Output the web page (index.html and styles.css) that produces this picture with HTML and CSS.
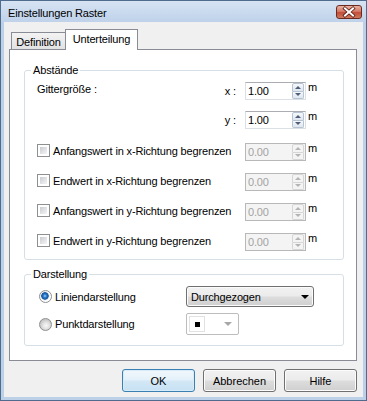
FILE: index.html
```html
<!DOCTYPE html>
<html>
  <head>
    <meta http-equiv="Content-Type" content="text/html;charset=UTF-8">
    <title>Einstellungen Raster</title>
    <link rel="stylesheet" href="styles.css">
  </head>
  <body>
    <div class="window">
      <div class="titlebar">
        <span class="title">Einstellungen Raster</span>
        <span class="close">
          <svg width="26" height="14" viewBox="0 0 26 14">
            <path d="M9 3.5 L17 10.5 M17 3.5 L9 10.5" stroke="#5a1a10" stroke-width="3.6" stroke-linecap="square"/>
            <path d="M9 3.5 L17 10.5 M17 3.5 L9 10.5" stroke="#fff" stroke-width="2" stroke-linecap="square"/>
          </svg>
        </span>
      </div>
      <div class="client">
        <div class="tabs">
          <div class="tab">Definition</div>
          <div class="tab active">Unterteilung</div>
        </div>
        <div class="panel">
          <fieldset class="group group-spacing">
            <legend>Abstände</legend>
            <div class="row row-x">
              <span class="lead"><span class="size-label">Gittergröße :</span></span>
              <span class="axis">x :</span>
              <div class="spin">
                <span class="spin-value">1.00</span>
                <span class="spin-buttons"><i class="up"></i><i class="down"></i></span>
              </div>
              <span class="unit">m</span>
            </div>
            <div class="row row-y">
              <span class="lead"></span>
              <span class="axis">y :</span>
              <div class="spin">
                <span class="spin-value">1.00</span>
                <span class="spin-buttons"><i class="up"></i><i class="down"></i></span>
              </div>
              <span class="unit">m</span>
            </div>
            <div class="row row-limit first">
              <label class="lead check-label"><span class="check"></span>Anfangswert in x-Richtung begrenzen</label>
              <div class="spin disabled">
                <span class="spin-value">0.00</span>
                <span class="spin-buttons"><i class="up"></i><i class="down"></i></span>
              </div>
              <span class="unit">m</span>
            </div>
            <div class="row row-limit">
              <label class="lead check-label"><span class="check"></span>Endwert in x-Richtung begrenzen</label>
              <div class="spin disabled">
                <span class="spin-value">0.00</span>
                <span class="spin-buttons"><i class="up"></i><i class="down"></i></span>
              </div>
              <span class="unit">m</span>
            </div>
            <div class="row row-limit">
              <label class="lead check-label"><span class="check"></span>Anfangswert in y-Richtung begrenzen</label>
              <div class="spin disabled">
                <span class="spin-value">0.00</span>
                <span class="spin-buttons"><i class="up"></i><i class="down"></i></span>
              </div>
              <span class="unit">m</span>
            </div>
            <div class="row row-limit">
              <label class="lead check-label"><span class="check"></span>Endwert in y-Richtung begrenzen</label>
              <div class="spin disabled">
                <span class="spin-value">0.00</span>
                <span class="spin-buttons"><i class="up"></i><i class="down"></i></span>
              </div>
              <span class="unit">m</span>
            </div>
          </fieldset>
          <fieldset class="group group-display">
            <legend>Darstellung</legend>
            <div class="mode-row first">
              <label class="mode-label"><span class="radio checked"></span>Liniendarstellung</label>
              <div class="combo">
                <span class="combo-text">Durchgezogen</span>
                <span class="combo-arrow"></span>
              </div>
            </div>
            <div class="mode-row second">
              <label class="mode-label"><span class="radio"></span>Punktdarstellung</label>
              <div class="combo combo-small">
                <span class="swatch"><span class="dot"></span></span>
                <span class="combo-arrow"></span>
              </div>
            </div>
          </fieldset>
        </div>
        <div class="buttons">
          <button class="btn default">OK</button>
          <button class="btn">Abbrechen</button>
          <button class="btn">Hilfe</button>
        </div>
      </div>
    </div>
  </body>
</html>
```

FILE: styles.css
```css
body {
  margin: 0;
  font-family: "Liberation Sans", Arial, sans-serif;
  font-size: 11px;
  letter-spacing: -0.15px;
  color: #000;
}
.window {
  width: 367px;
  height: 401px;
  box-sizing: border-box;
  border: 1px solid #4f6b8e;
  background: #bcd0e8;
  padding: 0 3px 3px;
  display: flex;
  flex-direction: column;
}
.titlebar {
  height: 21px;
  margin: 0 -3px;
  padding: 0 4px 0 7px;
  display: flex;
  align-items: flex-start;
  background: linear-gradient(#d6e3f3, #bfd2ea);
}
.title {
  margin-top: 5px;
  line-height: 14px;
  flex: 1;
}
.close {
  margin-top: 4px;
  width: 26px;
  height: 14px;
  box-sizing: border-box;
  border: 1px solid #6b2a1f;
  border-radius: 3px;
  background: linear-gradient(#eab2a4, #d47a68 45%, #c24d39 55%, #cf7a5e);
  display: flex;
  align-items: center;
  justify-content: center;
}
.close svg {
  display: block;
  margin: -1px;
}
.client {
  flex: 1;
  background: #f0f0f0;
  padding: 7px 6px 0 5px;
  display: flex;
  flex-direction: column;
}
.tabs {
  display: flex;
  align-items: flex-end;
  height: 20px;
  padding-left: 2px;
}
.tab {
  box-sizing: border-box;
  height: 17px;
  width: 55px;
  border: 1px solid #898c95;
  border-bottom: 0;
  background: linear-gradient(#f3f3f3, #e2e2e2);
  display: flex;
  justify-content: center;
  align-items: center;
  padding-top: 2px;
}
.tab.active {
  width: 73px;
  height: 21px;
  margin-left: -1px;
  margin-bottom: -1px;
  background: #fff;
  padding-top: 0;
  padding-bottom: 2px;
  position: relative;
  z-index: 1;
}
.panel {
  background: #fff;
  border: 1px solid #898c95;
  padding: 0 12px 14px 14px;
}
.group {
  margin: 0;
  min-inline-size: 0;
  border: 1px solid #d5dfe5;
  border-radius: 3px;
  padding: 0 26px 8px 6px;
}
.group legend {
  padding: 0 2px;
  line-height: 14px;
}
.group-spacing {
  margin-top: 13px;
}
.group-display {
  margin-top: 7px;
  padding-bottom: 10px;
}
.row {
  display: flex;
  align-items: center;
  height: 18px;
  margin-left: 6px;
}
.row-x {
  margin-top: 5px;
}
.row-y {
  margin-top: 11px;
}
.row-limit {
  margin-top: 12px;
}
.row-limit.first {
  margin-top: 14px;
}
.lead {
  flex: 1;
  align-self: stretch;
  display: flex;
}
.size-label {
  line-height: 14px;
}
.check-label {
  align-items: center;
  margin-bottom: 3px;
}
.axis {
  margin-right: 9px;
}
.unit {
  align-self: flex-start;
  line-height: 11px;
  width: 9px;
  padding-left: 2px;
}
.spin {
  width: 61px;
  height: 18px;
  box-sizing: border-box;
  border: 1px solid #dbdfe6;
  border-top-color: #abadb3;
  background: #fff;
  display: flex;
  align-items: center;
}
.spin-value {
  flex: 1;
  padding-left: 2px;
}
.spin-buttons {
  width: 12px;
  height: 16px;
  margin-right: 1px;
  display: flex;
  flex-direction: column;
}
.spin-buttons i {
  flex: 1;
  box-sizing: border-box;
  border: 1px solid #b6c3d3;
  background: linear-gradient(#f6f8fb, #dfe6ef);
  display: flex;
  align-items: center;
  justify-content: center;
}
.spin-buttons i.up {
  border-radius: 2px 2px 0 0;
}
.spin-buttons i.down {
  border-top: 0;
  border-radius: 0 0 2px 2px;
}
.spin-buttons i::after {
  content: "";
  border-left: 3px solid transparent;
  border-right: 3px solid transparent;
}
.spin-buttons i.up::after {
  border-bottom: 3px solid #4e5d78;
}
.spin-buttons i.down::after {
  border-top: 3px solid #4e5d78;
}
.spin.disabled {
  background: #f4f4f4;
  border-color: #b8b8b8;
  color: #a3a3a3;
}
.spin.disabled .spin-buttons i {
  border-color: #d6d6d6;
  background: #f4f4f4;
}
.spin.disabled .spin-buttons i.up::after {
  border-bottom-color: #b4b4b4;
}
.spin.disabled .spin-buttons i.down::after {
  border-top-color: #b4b4b4;
}
.check {
  width: 13px;
  height: 13px;
  box-sizing: border-box;
  border: 1px solid #8e8f8f;
  padding: 2px;
  margin-right: 3px;
  background: linear-gradient(135deg, #c9ccd1, #f5f5f6) content-box, #fff;
}
.mode-row {
  display: flex;
  align-items: center;
  margin-left: 6px;
}
.mode-row.first {
  margin-top: 5px;
}
.mode-row.second {
  margin-top: 6px;
}
.mode-label {
  width: 149px;
  display: flex;
  align-items: center;
}
.radio {
  width: 13px;
  height: 13px;
  box-sizing: border-box;
  border: 1px solid #8e8f8f;
  border-radius: 50%;
  margin: 0 3px 0 2px;
  background: radial-gradient(circle at 55% 60%, #f8f8f8 0, #e4e4e4 3px, #c6c6c6 6px);
}
.radio.checked {
  background: radial-gradient(circle at 45% 45%, #9fd3fb 0, #2c7fd0 1.6px, #154f95 3.4px, #dfe6ee 4px, #fff 5px);
}
.combo {
  width: 128px;
  height: 21px;
  box-sizing: border-box;
  border: 1px solid #707070;
  border-radius: 3px;
  background: linear-gradient(#f2f2f2, #ebebeb 48%, #dddddd 52%, #cfcfcf);
  box-shadow: inset 0 0 0 1px #fbfbfb;
  display: flex;
  align-items: center;
  padding: 0 4px 0 4px;
}
.combo-text {
  flex: 1;
}
.combo-arrow {
  border-left: 4px solid transparent;
  border-right: 4px solid transparent;
  border-top: 4px solid #000;
}
.combo-small {
  width: 53px;
  height: 22px;
  border-color: #bdbdbd;
  border-radius: 2px;
  background: #fff;
  box-shadow: none;
  padding: 0 6px 0 2px;
}
.combo-small .combo-arrow {
  border-top-color: #a7a7a7;
}
.swatch {
  width: 16px;
  height: 16px;
  box-sizing: border-box;
  border: 1px solid #e2e2e2;
  margin-right: auto;
  display: flex;
  align-items: center;
  justify-content: center;
}
.dot {
  width: 5px;
  height: 5px;
  background: #000;
}
.buttons {
  display: flex;
  justify-content: flex-end;
  gap: 8px;
  margin-top: 8px;
}
.btn {
  width: 73px;
  height: 23px;
  box-sizing: border-box;
  border: 1px solid #707070;
  border-radius: 3px;
  background: linear-gradient(#f2f2f2, #ebebeb 48%, #dddddd 52%, #cfcfcf);
  box-shadow: inset 0 0 0 1px #fcfcfc;
  font: inherit;
  color: #000;
  padding: 0;
}
.btn.default {
  border-color: #3c7fb1;
  background: linear-gradient(#f0f7fc, #e4f1fa 48%, #d3e8f6 52%, #c7e1f3);
  box-shadow: inset 0 0 0 1px #d6ecf9;
}
```
